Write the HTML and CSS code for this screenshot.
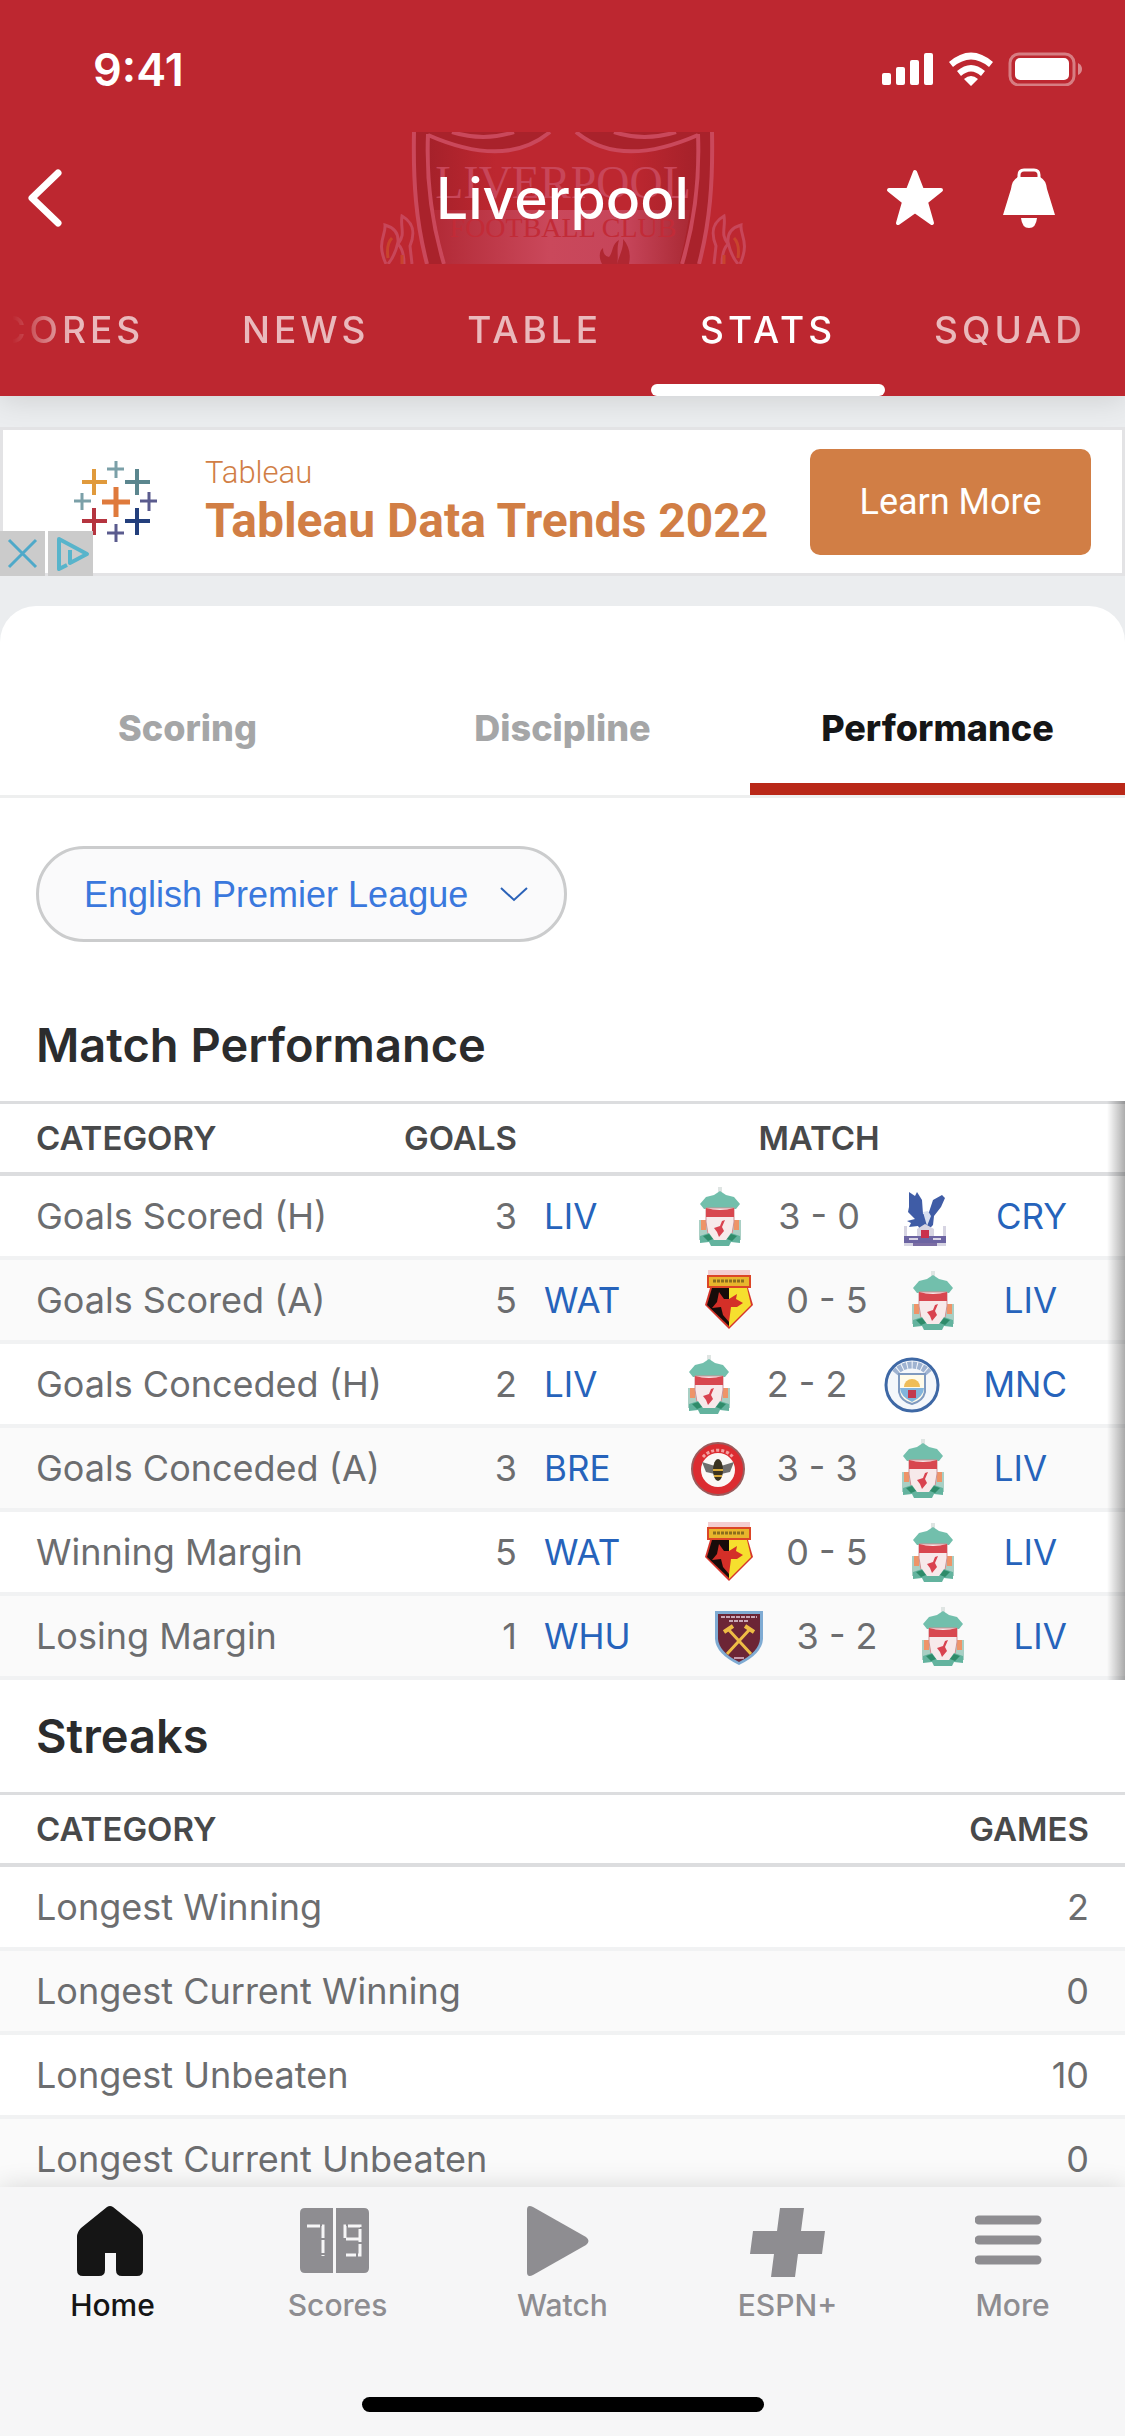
FILE: index.html
```
<!DOCTYPE html>
<html lang="en">
<head>
  <meta charset="UTF-8" />
  <meta name="viewport" content="width=device-width, initial-scale=1.0"/>
  <title>Liverpool - Stats</title>
  <link rel="stylesheet" href="styles.css">
</head>
<body>
  <!-- club badges, used by the match table -->
  <svg class="sprite" aria-hidden="true">
    <symbol id="liv" viewBox="0 0 60 60">
      <path d="M30 1v8" stroke="#dfe5e3" stroke-width="4"/>
      <path d="M10 18l6-7 8-2 6-4 6 4 8 2 6 7-4 5H14z" fill="#72bfac"/>
      <path d="M9 34h9v20H9zM42 34h9v20h-9z" fill="#a9cfc4"/>
      <path d="M11 34h5v10h-5zM44 34h5v10h-5z" fill="#ee9468"/>
      <path d="M16 22h28v14l-2 12-5 7H23l-5-7-2-12z" fill="#f7e9ea" stroke="#cf8f93" stroke-width="1"/>
      <path d="M16 22q14 4 28 0v9H16z" fill="#d8474f"/>
      <path d="M35 34l-3 7 2 4-5 6-2-5-3-4 6-2 2-5z" fill="#d9424f"/>
      <path d="M10 50l9-3 5 7h12l5-7 9 3v7l-9-1-2 4H21l-2-4-9 1z" fill="#63b39e"/>
      <path d="M13 50l6-2 4 5-5 2zM47 50l-6-2-4 5 5 2z" fill="#2f8b6a"/>
    </symbol>
    <symbol id="cry" viewBox="0 0 60 60">
      <path d="M14 6l6 4 2-4 5 8 1 14 6-2 4-12 9-5 3 3-4 9-7 9-1 9-6 6h-6l-3-5-9 1 2-4-4-2 8-2-7-7 1-5z" fill="#3f5ca6"/>
      <path d="M28 26l4 14 4-10-3-5z" fill="#d8dff0"/>
      <path d="M9 40h3v10h10v-7l8-5 9 5v7h9V40h3v20H9z" fill="#d6d4e2"/>
      <path d="M9 50h42v7H9z" fill="#6c64a2"/>
      <path d="M14 53h9M38 53h8" stroke="#d9d4e6" stroke-width="2"/>
      <path d="M26 44h8v8h-8z" fill="#c92f4b"/>
      <path d="M18 57h24v3H18z" fill="#7b6da4"/>
    </symbol>
    <symbol id="wat" viewBox="0 0 60 60">
      <path d="M10 0h42v6H10z" fill="#f4cdd0"/>
      <path d="M10 6h42v11H10z" fill="#e8b52c" stroke="#dc4526" stroke-width="2"/>
      <path d="M15 11h32" stroke="#8a6d1d" stroke-width="3" stroke-dasharray="3 1"/>
      <path d="M12 18h38l5 17-24 24L7 35z" fill="#d5352b"/>
      <path d="M14 18h17v38L9 35z" fill="#170c0a"/>
      <path d="M31 18h18l4 17-22 22z" fill="#f6df2e"/>
      <path d="M21 22l5 7h5l8-5-1 5 7 4-6 4h-6l-2 15-6-7-2-8-9 1 5-6z" fill="#d42f28"/>
    </symbol>
    <symbol id="mnc" viewBox="0 0 60 60">
      <circle cx="30" cy="31" r="26" fill="#f4f7fb" stroke="#3e68a5" stroke-width="3"/>
      <path d="M13 19a22 22 0 0 1 34 0" fill="none" stroke="#9fb3d1" stroke-width="7" stroke-dasharray="4 1"/>
      <path d="M17 20h26v18q-2 9-13 12-11-3-13-12z" fill="#fffbea" stroke="#7f9ac0" stroke-width="2"/>
      <path d="M22 33a8 8 0 0 1 16 0z" fill="#efbd57"/>
      <path d="M18 34h24q0 8-12 14-12-6-12-14z" fill="#82b4dc"/>
      <path d="M26 36h8v8h-8z" fill="#c23a50"/>
    </symbol>
    <symbol id="bre" viewBox="0 0 60 60">
      <circle cx="30" cy="31" r="26" fill="#dc2c31" stroke="#9b5b5c" stroke-width="2"/>
      <path d="M15 19a20 20 0 0 1 30 0" fill="none" stroke="#f3a0a0" stroke-width="3" stroke-dasharray="3 2"/>
      <circle cx="30" cy="32" r="17" fill="#fbf8f6"/>
      <path d="M14 24l13 4v8l-9-2zM46 24l-13 4v8l9-2z" fill="#6f6e6d"/>
      <ellipse cx="30" cy="32" rx="5" ry="11" fill="#3a3220"/>
      <path d="M25 32h10M26 38h8" stroke="#d7a83a" stroke-width="2"/>
    </symbol>
    <symbol id="whu" viewBox="0 0 60 60">
      <path d="M6 5h48v28q-1 15-24 26Q7 48 6 33z" fill="#7fabd3"/>
      <path d="M9 8h42v25q-1 13-21 23Q10 46 9 33z" fill="#6c2536"/>
      <path d="M12 11h36M20 15h20" stroke="#c9a7b6" stroke-width="2" stroke-dasharray="4 1"/>
      <path d="M18 48l23-25M42 48L19 23" stroke="#eebc45" stroke-width="3"/>
      <path d="M15 26l9-6M36 20l9 6" stroke="#eebc45" stroke-width="4"/>
      <path d="M25 52h10" stroke="#c59aab" stroke-width="2"/>
    </symbol>
  </svg>

  <div class="app">
    <header class="header">
      <div class="status">
        <span class="time">9:41</span>
        <svg class="status-icons" viewBox="0 0 200 34" fill="#fff">
          <rect x="0" y="21" width="9" height="12" rx="2"/>
          <rect x="14" y="15" width="9" height="18" rx="2"/>
          <rect x="28" y="8" width="9" height="25" rx="2"/>
          <rect x="42" y="1" width="9" height="32" rx="2"/>
          <path d="M67 10q22-19 44 0l-4 5q-18-15-36 0zM75 19q14-12 28 0l-4 5q-10-9-20 0zM82 27q7-6 14 0l-7 7z"/>
          <rect x="128" y="2" width="64" height="31" rx="9" fill="none" stroke="#fff" stroke-opacity=".4" stroke-width="3"/>
          <rect x="133" y="6" width="54" height="22" rx="5"/>
          <path d="M196 11q4 2 4 6t-4 6z" opacity=".45"/>
        </svg>
      </div>

      <div class="title-bar">
        <svg class="crest" viewBox="0 0 366 132" aria-hidden="true">
          <defs>
            <linearGradient id="shade">
              <stop offset="0" stop-color="#a5212a"/>
              <stop offset=".25" stop-color="#bd2730"/>
              <stop offset=".75" stop-color="#bd2730"/>
              <stop offset="1" stop-color="#a5212a"/>
            </linearGradient>
            <linearGradient id="glow">
              <stop offset="0" stop-color="#b22a36"/>
              <stop offset=".45" stop-color="#ca485b"/>
              <stop offset=".75" stop-color="#c6455a"/>
              <stop offset="1" stop-color="#aa2934"/>
            </linearGradient>
          </defs>
          <path d="M34 0h298c1 50-2 90-13 132H47C36 90 33 50 34 0z" fill="#a9222b"/>
          <path d="M48 3c50 22 92 22 122-3h26c30 25 72 25 122 3 2 50-3 90-14 129H64C52 92 46 50 48 3z" fill="url(#shade)"/>
          <path d="M54 78h256c-3 20-6 36-11 54H66c-5-18-9-34-12-54z" fill="url(#glow)"/>
          <g fill="none" stroke="#ca485b" stroke-width="4">
            <path d="M34 0c-1 50 2 90 13 132M332 0c1 50-2 90-13 132M48 2c-2 50 4 90 16 130M318 2c2 50-4 90-16 130"/>
            <path d="M48 3c50 22 92 22 122-3M318 3c-50 22-92 22-122-3M72 0q32 10 62 0M234 0q30 10 62 0"/>
          </g>
          <text x="183" y="66" text-anchor="middle" font-size="46" fill="#c84659">LIVERPOOL</text>
          <text x="183" y="105" text-anchor="middle" font-size="28" fill="#c22b37">FOOTBALL CLUB</text>
          <path d="M222 132c-4-8-2-14 1-16q0 8 6 9c5-6 2-12 10-17-3 10 0 16-2 24zM237 132c2-8 7-16 6-25 6 7 8 15 6 25z" fill="#b02731"/>
          <g fill="none" stroke="#c84659" stroke-width="3">
            <path d="M6 132C-4 110 6 104 5 93q14 4 13 17-3 14-10 22M18 112c8-10 2-16 4-28 14 8 12 20 8 30l2 18M24 132q0-14-6-20"/>
            <path d="M360 132c10-22 0-28 1-39q-14 4-13 17 3 14 10 22M348 112c-8-10-2-16-4-28-14 8-12 20-8 30l-2 18M342 132q0-14 6-20"/>
          </g>
          <path d="M8 126q-2-14 4-20M22 132v-9M358 126q2-14-4-20M344 132v-9" stroke="#c8442d" stroke-width="3" fill="none"/>
        </svg>
        <button class="icon-btn" aria-label="Back">
          <svg width="34" height="58" viewBox="0 0 34 58"><path d="M30 4L4 29l26 25" fill="none" stroke="#fff" stroke-width="7" stroke-linecap="round" stroke-linejoin="round"/></svg>
        </button>
        <h1>Liverpool</h1>
        <div class="actions">
          <button class="icon-btn" aria-label="Favorite">
            <svg width="58" height="58" viewBox="0 0 58 58"><path d="M29 3l7 18h19L40 33l6 21-17-12-17 12 6-21L3 21h19z" fill="#fff" stroke="#fff" stroke-width="4" stroke-linejoin="round"/></svg>
          </button>
          <button class="icon-btn" aria-label="Alerts">
            <svg width="52" height="62" viewBox="0 0 52 62" fill="#fff">
              <path d="M16 12V8q0-5 5-5h10q5 0 5 5v4" fill="none" stroke="#fff" stroke-width="3"/>
              <path d="M15 10h22q6 3 7 12l8 26H0l8-26q1-9 7-12z"/>
              <path d="M18 51h16q-1 10-8 10t-8-10z"/>
            </svg>
          </button>
        </div>
      </div>

      <nav class="top-tabs">
        <a href="#">SCORES</a>
        <a href="#">NEWS</a>
        <a href="#">TABLE</a>
        <a href="#" class="active">STATS</a>
        <a href="#">SQUAD</a>
      </nav>
    </header>

    <main class="main">
      <section class="ad">
        <svg class="ad-logo" viewBox="0 0 84 82" fill="none">
          <path d="M42 26v30M28 41h28" stroke="#df7a3c" stroke-width="5"/>
          <path d="M20 8v26M8 21h25" stroke="#e09a3c" stroke-width="4"/>
          <path d="M63 8v26M51 21h25" stroke="#5b868e" stroke-width="4"/>
          <path d="M20 47v27M8 60h25" stroke="#b5343f" stroke-width="4"/>
          <path d="M63 47v27M51 60h25" stroke="#233f7c" stroke-width="4"/>
          <path d="M42 0v17M33 8h17M8 32v17M0 40h17" stroke="#7ba0a8" stroke-width="3"/>
          <path d="M75 31v19M66 40h17M42 63v18M33 72h17" stroke="#5a5b8e" stroke-width="3"/>
        </svg>
        <div class="ad-text">
          <span class="ad-brand">Tableau</span>
          <strong class="ad-title">Tableau Data Trends 2022</strong>
        </div>
        <button class="ad-btn">Learn More</button>
        <div class="ad-badges">
          <button aria-label="Close ad"><svg width="45" height="45" viewBox="0 0 45 45"><path d="M9 9l27 27M36 9L9 36" stroke="#4fa9c9" stroke-width="3"/></svg></button>
          <button aria-label="Ad choices"><svg width="45" height="45" viewBox="0 0 45 45" fill="none" stroke="#58b4cb" stroke-width="4" stroke-linejoin="round"><path d="M19 34l-8 4V8l28 15-17 9V19"/></svg></button>
        </div>
      </section>

      <section class="card">
        <div class="tabs">
          <button>Scoring</button>
          <button>Discipline</button>
          <button class="active">Performance</button>
        </div>

        <div class="filter">
          <select aria-label="Competition">
            <option>English Premier League</option>
          </select>
          <svg width="28" height="16" viewBox="0 0 28 16"><path d="M1 1l13 12L27 1" fill="none" stroke="#2b62b8" stroke-width="2"/></svg>
        </div>

        <h2>Match Performance</h2>
        <div class="table-wrap">
          <table class="match-table">
            <thead>
              <tr><th>CATEGORY</th><th class="num goals">GOALS</th><th class="match-col">MATCH</th></tr>
            </thead>
            <tbody>
              <tr>
                <td>Goals Scored (H)</td><td class="num">3</td>
                <td class="match-col"><div class="match full"><a href="#">LIV</a><svg><use href="#liv"/></svg><span>3 - 0</span><svg><use href="#cry"/></svg><a href="#">CRY</a></div></td>
              </tr>
              <tr>
                <td>Goals Scored (A)</td><td class="num">5</td>
                <td class="match-col"><div class="match"><a href="#">WAT</a><svg><use href="#wat"/></svg><span>0 - 5</span><svg><use href="#liv"/></svg><a href="#">LIV</a></div></td>
              </tr>
              <tr>
                <td>Goals Conceded (H)</td><td class="num">2</td>
                <td class="match-col"><div class="match full"><a href="#">LIV</a><svg><use href="#liv"/></svg><span>2 - 2</span><svg><use href="#mnc"/></svg><a href="#">MNC</a></div></td>
              </tr>
              <tr>
                <td>Goals Conceded (A)</td><td class="num">3</td>
                <td class="match-col"><div class="match"><a href="#">BRE</a><svg><use href="#bre"/></svg><span>3 - 3</span><svg><use href="#liv"/></svg><a href="#">LIV</a></div></td>
              </tr>
              <tr>
                <td>Winning Margin</td><td class="num">5</td>
                <td class="match-col"><div class="match"><a href="#">WAT</a><svg><use href="#wat"/></svg><span>0 - 5</span><svg><use href="#liv"/></svg><a href="#">LIV</a></div></td>
              </tr>
              <tr>
                <td>Losing Margin</td><td class="num">1</td>
                <td class="match-col"><div class="match"><a href="#">WHU</a><svg><use href="#whu"/></svg><span>3 - 2</span><svg><use href="#liv"/></svg><a href="#">LIV</a></div></td>
              </tr>
            </tbody>
          </table>
        </div>

        <h2>Streaks</h2>
        <table>
          <thead>
            <tr><th>CATEGORY</th><th class="num">GAMES</th></tr>
          </thead>
          <tbody>
            <tr><td>Longest Winning</td><td class="num">2</td></tr>
            <tr><td>Longest Current Winning</td><td class="num">0</td></tr>
            <tr><td>Longest Unbeaten</td><td class="num">10</td></tr>
            <tr><td>Longest Current Unbeaten</td><td class="num">0</td></tr>
          </tbody>
        </table>
      </section>
    </main>

    <footer class="footer">
      <nav class="bottom-nav">
        <a href="#" class="active">
          <svg viewBox="3 0 76 72" fill="currentColor"><path d="M35 2q3-2 6 0l26 21q4 4 4 9v33q0 6-6 6H50q-6 0-6-6V48H33v17q0 6-6 6H11q-6 0-6-6V32q0-5 4-9z"/></svg>
          Home
        </a>
        <a href="#">
          <svg viewBox="3 0 76 72">
            <path d="M8 3h28v65H8q-5 0-5-5V8q0-5 5-5zM39 3h28q5 0 5 5v55q0 5-5 5H39z" fill="currentColor"/>
            <path d="M10 21h16v30M62 34H48V21h15v29H49" fill="none" stroke="#f6f6f7" stroke-width="3" stroke-dasharray="13 2"/>
          </svg>
          Scores
        </a>
        <a href="#">
          <svg viewBox="3 0 76 72" fill="currentColor"><path d="M5 5q0-6 6-3l53 30q5 4 0 8L11 70q-6 3-6-3z"/></svg>
          Watch
        </a>
        <a href="#">
          <svg viewBox="0 0 76 72" fill="currentColor"><path d="M30 3h24l-3 23h24l-3 23H48l-3 23H21l3-23H0l3-23h24z"/></svg>
          ESPN+
        </a>
        <a href="#">
          <svg viewBox="3 0 76 72" stroke="currentColor" stroke-width="9" stroke-linecap="round"><path d="M7 15h58M7 35h58M7 55h58"/></svg>
          More
        </a>
      </nav>
      <div class="home-bar"></div>
    </footer>
  </div>
</body>
</html>
```
FILE: styles.css
```
* {
  box-sizing: border-box;
}

body {
  margin: 0;
  background: #ebedef;
  color: #6c6d6f;
  font-family: Inter, "Liberation Sans", sans-serif;
}

a {
  color: inherit;
  text-decoration: none;
}

button {
  padding: 0;
  border: none;
  background: none;
  font: inherit;
  color: inherit;
  cursor: pointer;
}

svg {
  display: block;
}

.sprite {
  display: none;
}

.app {
  display: flex;
  flex-direction: column;
  height: 100vh;
}

/* header */

.header {
  position: relative;
  z-index: 1;
  background: #bd2730;
  color: #fff;
  box-shadow: 0 4px 28px rgba(0, 0, 0, 0.12);
}

.status {
  display: flex;
  align-items: center;
  justify-content: space-between;
  height: 132px;
  padding: 6px 43px 0 93px;
}

.time {
  font-size: 45px;
  font-weight: 600;
}

.status-icons {
  width: 200px;
  height: 34px;
}

.title-bar {
  position: relative;
  display: grid;
  grid-template-columns: 1fr auto 1fr;
  align-items: center;
  height: 132px;
  padding: 0 70px 0 28px;
}

.title-bar > * {
  position: relative;
}

.title-bar .crest {
  position: absolute;
  left: 50%;
  width: 366px;
  height: 132px;
  margin-left: -183px;
  font-family: "Liberation Serif", serif;
}

.title-bar h1 {
  margin: 0 0 0 42px;
  font-size: 57px;
  font-weight: 500;
}

.title-bar .icon-btn:first-of-type {
  justify-self: start;
}

.actions {
  display: flex;
  align-items: center;
  justify-content: flex-end;
  gap: 59px;
}

.top-tabs {
  display: flex;
  justify-content: flex-end;
  height: 132px;
  margin: 0 12px;
  overflow: hidden;
  color: rgba(255, 255, 255, 0.68);
  -webkit-mask: linear-gradient(to right, transparent, #000 60px, #000 calc(100% - 60px), rgba(0, 0, 0, 0.6));
  mask: linear-gradient(to right, transparent, #000 60px, #000 calc(100% - 60px), rgba(0, 0, 0, 0.6));
}

.top-tabs a {
  flex: none;
  padding: 12px 49px 0;
  font-size: 37px;
  font-weight: 500;
  letter-spacing: 4px;
  line-height: 108px;
}

.top-tabs a:last-child {
  padding-right: 27px;
}

.top-tabs .active {
  color: #fff;
}

.top-tabs .active::after {
  content: "";
  display: block;
  height: 12px;
  margin: 0 -49px;
  border-radius: 6px;
  background: #fff;
}

/* content */

.main {
  flex: 1;
  min-height: 0;
  padding-top: 31px;
  overflow-y: auto;
  scrollbar-width: none;
}

.ad {
  position: relative;
  display: flex;
  align-items: center;
  height: 149px;
  padding: 0 31px 0 71px;
  border: 3px solid #e3e3e5;
  background: #fff;
  color: #d17e45;
  font-family: Roboto, "Liberation Sans", sans-serif;
}

.ad-logo {
  width: 84px;
  height: 82px;
}

.ad-text {
  flex: 1;
  margin-left: 47px;
  padding-bottom: 6px;
}

.ad-brand {
  display: block;
  font-size: 31px;
  font-weight: 300;
  line-height: 44px;
}

.ad-title {
  display: block;
  font-size: 48px;
  font-weight: 700;
  line-height: 52px;
}

.ad-btn {
  width: 281px;
  height: 106px;
  border-radius: 10px;
  background: #d17e45;
  color: #fff;
  font-size: 36px;
}

.ad-badges {
  position: absolute;
  left: -3px;
  bottom: -3px;
  display: flex;
  gap: 3px;
}

.ad-badges button {
  background: #cbcbcb;
}

.card {
  margin-top: 30px;
  border-radius: 36px 36px 0 0;
  background: #fff;
}

.tabs {
  display: grid;
  grid-template-columns: repeat(3, 1fr);
  height: 192px;
  padding-top: 54px;
  border-bottom: 3px solid #eeefef;
}

.tabs button {
  border-top: 12px solid transparent;
  border-bottom: 12px solid transparent;
  color: #a5a6a7;
  font-size: 36px;
  font-weight: 800;
}

.tabs .active {
  border-bottom-color: #b92818;
  color: #151617;
}

.filter {
  position: relative;
  width: fit-content;
  margin: 48px 36px 47px;
}

.filter select {
  appearance: none;
  height: 96px;
  padding: 0 95px 0 45px;
  border: 3px solid #cbcccd;
  border-radius: 48px;
  background: #fafafb;
  color: #3a78dd;
  font-family: "Liberation Sans", Arial, sans-serif;
  font-size: 36px;
}

.filter svg {
  position: absolute;
  top: 41px;
  right: 39px;
  pointer-events: none;
}

h2 {
  margin: 0;
  padding: 0 36px;
  color: #2b2c2d;
  font-size: 47px;
  font-weight: 600;
  line-height: 112px;
}

table {
  width: 100%;
  border-collapse: separate;
  border-spacing: 0;
  font-size: 36px;
}

th,
td {
  padding: 0 36px;
  text-align: left;
  white-space: nowrap;
}

th {
  height: 75px;
  border-top: 3px solid #dcdddf;
  border-bottom: 4px solid #dcdddf;
  color: #48494a;
  font-size: 33px;
  font-weight: 600;
}

td {
  height: 84px;
  border-bottom: 4px solid #f1f2f3;
}

tbody tr:nth-child(even) {
  background: #fafafa;
}

.num {
  text-align: right;
}

.table-wrap {
  position: relative;
}

.table-wrap::after {
  content: "";
  position: absolute;
  top: 0;
  right: 0;
  bottom: 0;
  width: 18px;
  background: linear-gradient(to right, transparent, rgba(0, 0, 0, 0.32));
}

.match-table th:first-child,
.match-table td:first-child {
  padding-right: 0;
}

.match-table .num {
  padding: 0;
}

.goals {
  width: 120px;
}

.match-table .match-col {
  width: 608px;
  padding: 0 31px 0 27px;
  text-align: center;
}

.match {
  display: flex;
  align-items: center;
  width: fit-content;
}

.match.full {
  width: calc(100% - 27px);
}

.match a {
  color: #2663bb;
  font-size: 35px;
}

.match a:first-child {
  margin-right: auto;
}

.match svg {
  width: 60px;
  height: 60px;
}

.match a + svg {
  margin: 0 28px 0 78px;
}

.match span + svg {
  margin: 0 41px 0 35px;
}

/* bottom navigation */

.footer {
  position: relative;
  display: flex;
  flex-direction: column;
  align-items: center;
  justify-content: space-between;
  height: 249px;
  padding: 18px 0 24px;
  background: #f6f6f7;
  box-shadow: 0 0 24px rgba(0, 0, 0, 0.14);
}

.bottom-nav {
  display: grid;
  grid-template-columns: repeat(5, 1fr);
  width: 100%;
  color: #8e8d91;
  font-size: 30px;
  font-weight: 500;
  line-height: 36px;
  text-align: center;
}

.bottom-nav svg {
  width: 76px;
  height: 72px;
  margin: 0 auto 10px;
}

.bottom-nav .active {
  color: #151515;
}

.home-bar {
  width: 402px;
  height: 15px;
  border-radius: 8px;
  background: #000;
}
```
